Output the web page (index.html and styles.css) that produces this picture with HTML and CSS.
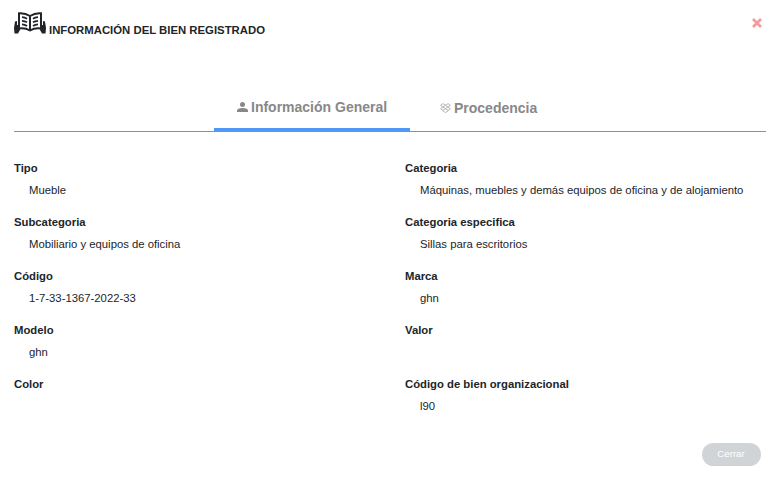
FILE: index.html
```html
<!DOCTYPE html>
<html lang="es">
<head>
<meta charset="utf-8">
<title>Información del bien registrado</title>
<link rel="stylesheet" href="styles.css">
</head>
<body>
<header class="header">
  <svg class="book" viewBox="0 0 32 22">
    <g fill="none" stroke="#212529" stroke-width="2">
      <path d="M16 4Q11 .8 5 1.300V16.500Q11 15.500 16 18.500Q21 15.500 27 16.500V1.300Q21 .8 16 4V18.500"/>
      <path stroke-width="1.800" d="M8 5.200q3 .2 5 1.500M8 8.800q3 .2 5 1.500M8 12.400q3 .2 5 1.500M24 5.200q-3 .2-5 1.500M24 8.800q-3 .2-5 1.500M24 12.400q-3 .2-5 1.500"/>
    </g>
    <path fill="#212529" d="M1 9.500 3 9v4l2.500 0 .5 5-2 3.500H.5L0 16zM31 9.500 29 9v4l-2.500 0-.5 5 2 3.500h3.500L32 16z"/>
  </svg>
  <h1 class="title">INFORMACIÓN DEL BIEN REGISTRADO</h1>
  <svg class="close" viewBox="0 0 10 10"><path d="M1 1 9 9M9 1 1 9" stroke="#f79a9a" stroke-width="2.800"/></svg>
</header>
<nav class="tabs">
  <div class="tab active">
    <svg class="person" viewBox="0 0 11 10"><circle cx="5.500" cy="2.500" r="2.500" fill="#888"/><path fill="#888" d="M0 10V8.500Q0 6 5.500 6T11 8.500V10z"/></svg>
    <span>Información General</span>
  </div>
  <div class="tab second">
    <svg class="origin" viewBox="0 0 11 10"><path d="M3 .6.6 2.300 3 4 .6 5.700 3 7.300 5.500 5.600 8 7.300 10.400 5.700 8 4 10.400 2.300 8 .6 5.500 2.300zM3 4 5.500 2.300 8 4 5.500 5.600zM2.500 7.700 5.500 9.500 8.500 7.700" fill="none" stroke="#999" stroke-width=".7"/></svg>
    <span>Procedencia</span>
  </div>
</nav>
<dl class="details">
  <div class="field"><dt>Tipo</dt><dd>Mueble</dd></div>
  <div class="field"><dt>Categoria</dt><dd>Máquinas, muebles y demás equipos de oficina y de alojamiento</dd></div>
  <div class="field"><dt>Subcategoria</dt><dd>Mobiliario y equipos de oficina</dd></div>
  <div class="field"><dt>Categoria especifica</dt><dd>Sillas para escritorios</dd></div>
  <div class="field"><dt>Código</dt><dd>1-7-33-1367-2022-33</dd></div>
  <div class="field"><dt>Marca</dt><dd>ghn</dd></div>
  <div class="field"><dt>Modelo</dt><dd>ghn</dd></div>
  <div class="field"><dt>Valor</dt><dd></dd></div>
  <div class="field"><dt>Color</dt><dd></dd></div>
  <div class="field"><dt>Código de bien organizacional</dt><dd>l90</dd></div>
</dl>
<footer class="footer"><button class="button">Cerrar</button></footer>
</body>
</html>
```

FILE: styles.css
```css
* { box-sizing: border-box; }
body {
  margin: 0;
  padding: 12px 16px 0 14px;
  height: 477px;
  overflow: hidden;
  background: #fff;
  color: #212529;
  font: 11.3px/16px "Liberation Sans", Arial, sans-serif;
}
.header { display: flex; height: 76px; align-items: flex-start; }
.book { width: 32px; height: 22px; }
.title { margin: 10px 0 0 3px; font-size: 11.35px; line-height: 16px; font-weight: bold; }
.close { width: 10px; height: 10px; margin: 6px 4px 0 auto; }
.tabs { display: flex; height: 44px; padding-left: 200px; border-bottom: 1px solid #539bf5; }
.tab { display: flex; align-items: flex-start; width: 196px; padding: 9px 0 0 23px; height: 43px; font: bold 14px/20px "Liberation Sans", Arial, sans-serif; color: #888; white-space: nowrap; }
.active { border-bottom: 3px solid #4f98f5; }
.second { width: 150px; padding: 10px 0 0 30px; }
.person, .origin { width: 11px; height: 10px; margin: 5px 3px 0 0; flex: none; }
.details { display: grid; grid-template-columns: 391px 1fr; grid-auto-rows: 54px; margin: 28px 0 0; }
.field dt { font-weight: bold; height: 22px; }
.field dd { margin: 0 0 0 15px; white-space: nowrap; }
.footer { display: flex; justify-content: flex-end; padding-right: 5px; margin-top: 13px; }
.button { width: 59px; height: 23px; border: 0; padding: 0 1px 2px 0; border-radius: 12px; background: #d0d4d7; color: #fff; font: 9.7px/21px "Liberation Sans", Arial, sans-serif; }
```
